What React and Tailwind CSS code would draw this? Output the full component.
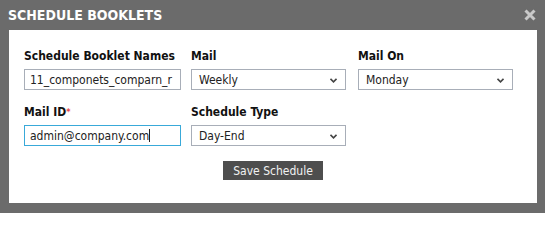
const font = { fontFamily: '"DejaVu Sans Condensed", "DejaVu Sans", Verdana, sans-serif' };

function Select({ value }) {
    return (
        <div className="relative w-[155px] h-[21px] border border-[#a8aeb8] bg-white flex items-center pl-[7px] text-[12px] text-[#222]">
            <span>{value}</span>
            <svg
                className="absolute right-[8px] top-[8px]"
                width="7"
                height="5"
                viewBox="0 0 7 5"
                aria-hidden="true"
            >
                <path d="M0.5 0.8 L3.5 3.8 L6.5 0.8" fill="none" stroke="#444" strokeWidth="1.6" />
            </svg>
        </div>
    );
}

function Label({ children, required }) {
    return (
        <div className="h-[20px] text-[12px] font-bold text-[#111] leading-[14px] whitespace-nowrap">
            {children}
            {required && <span className="text-[#e5484d] text-[9px] align-top">*</span>}
        </div>
    );
}

export default function App() {
    return (
        <div className="w-[545px] h-[213px] bg-[#6b6b6b] flex flex-col font-stretch-condensed" style={font}>
            <div className="h-[30px] shrink-0 flex items-center justify-between pl-[8px] pr-[9px]">
                <h2 className="text-white font-bold text-[14px]">SCHEDULE BOOKLETS</h2>
                <svg width="12" height="12" viewBox="0 0 12 12" aria-label="Close">
                    <path d="M1.5 1.5 L10.5 10.5 M10.5 1.5 L1.5 10.5" stroke="#c9c9c9" strokeWidth="3" />
                </svg>
            </div>

            <div className="ml-[9px] w-[528px] h-[173px] shrink-0 bg-white pt-[19px] px-[15px] flex flex-col">
                <div className="grid grid-cols-[157px_157px_157px] gap-x-[10px]">
                    <div>
                        <Label>Schedule Booklet Names</Label>
                        <input
                            readOnly
                            value="11_componets_comparn_r"
                            className="block w-[157px] h-[21px] border border-[#a8aeb8] px-[5px] text-[12px] text-[#222] outline-none"
                        />
                    </div>
                    <div>
                        <Label>Mail</Label>
                        <Select value="Weekly" />
                    </div>
                    <div>
                        <Label>Mail On</Label>
                        <Select value="Monday" />
                    </div>
                </div>

                <div className="grid grid-cols-[157px_157px_157px] gap-x-[10px] mt-[15px]">
                    <div>
                        <Label required>Mail ID</Label>
                        <div className="w-[157px] h-[21px] border border-[#39a9d9] px-[5px] text-[12px] text-[#222] flex items-center">
                            admin@company.com
                            <span className="inline-block w-px h-[13px] bg-[#222]" />
                        </div>
                    </div>
                    <div>
                        <Label>Schedule Type</Label>
                        <Select value="Day-End" />
                    </div>
                </div>

                <div className="flex justify-center mt-[15px]">
                    <button className="w-[100px] h-[19px] bg-[#4e4e4e] text-[#f2f2f2] text-[12px] leading-none">
                        Save Schedule
                    </button>
                </div>
            </div>
        </div>
    );
}
